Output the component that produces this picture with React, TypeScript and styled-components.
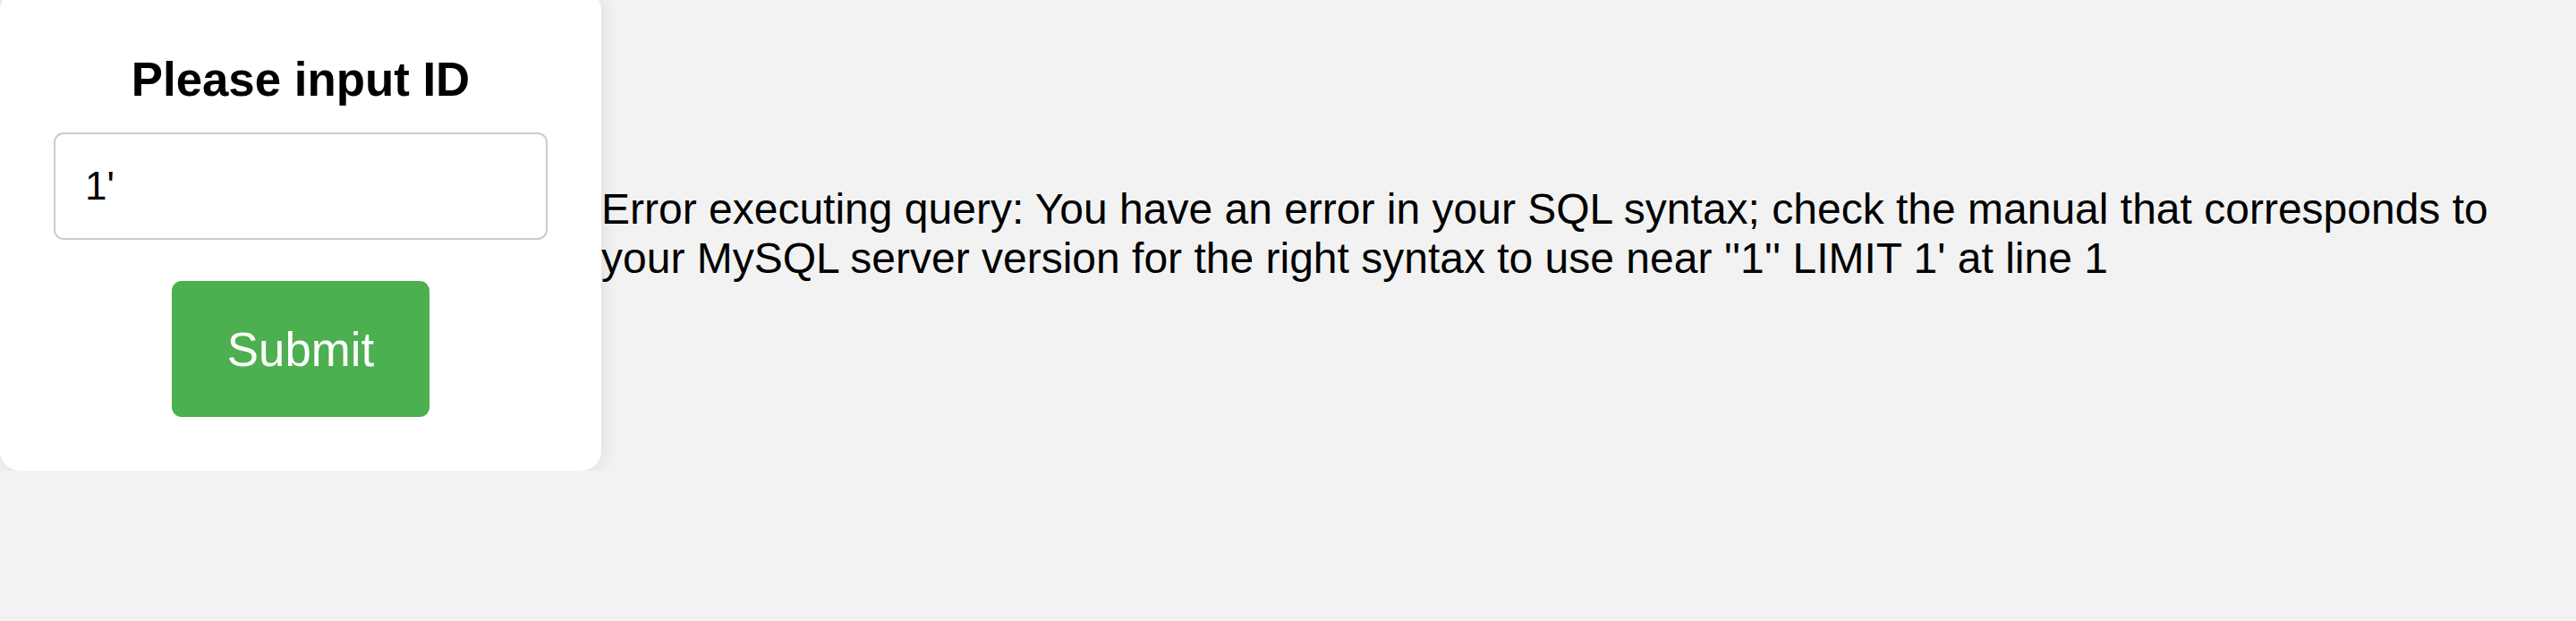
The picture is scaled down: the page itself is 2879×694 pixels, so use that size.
import React from "react";
import styled, { createGlobalStyle } from "styled-components";

const GlobalStyle = createGlobalStyle`
  html, body {
    margin: 0;
    padding: 0;
    background: #f2f2f2;
    font-family: "Liberation Sans", Arial, sans-serif;
    color: #000;
  }
`;

const Page = styled.div`
  display: flex;
  flex-direction: row;
  align-items: center;
  margin-top: -11px;
`;

const Card = styled.form`
  flex-shrink: 0;
  box-sizing: border-box;
  width: 672px;
  height: 537px;
  padding: 69px 0 0;
  display: flex;
  flex-direction: column;
  align-items: center;
  background: #ffffff;
  border-radius: 22px;
  box-shadow: 0 0 22px rgba(0, 0, 0, 0.1);
`;

const Title = styled.h2`
  margin: 0;
  font-size: 52.8px;
  font-weight: bold;
  line-height: normal;
`;

const IdInput = styled.input`
  box-sizing: border-box;
  width: 552px;
  height: 120px;
  margin-top: 29px;
  padding: 0 33px;
  border: 2.2px solid #cccccc;
  border-radius: 11px;
  background: #ffffff;
  font-family: "Liberation Sans", Arial, sans-serif;
  font-size: 44px;
  color: #000;
  outline: none;
`;

const SubmitButton = styled.button`
  box-sizing: border-box;
  height: 152px;
  margin-top: 46px;
  padding: 0 61.6px;
  border: none;
  border-radius: 11px;
  background: #4caf50;
  color: #ffffff;
  font-family: "Liberation Sans", Arial, sans-serif;
  font-size: 52.8px;
  line-height: normal;
  cursor: pointer;
`;

const Message = styled.p`
  flex: 1;
  margin: 0;
  padding-top: 7px;
  font-size: 48px;
  line-height: normal;
`;

export default function App() {
  return (
    <>
      <GlobalStyle />
      <Page>
        <Card onSubmit={(e) => e.preventDefault()}>
          <Title>Please input ID</Title>
          <IdInput type="text" defaultValue="1'" />
          <SubmitButton type="submit">Submit</SubmitButton>
        </Card>
        <Message>
          Error executing query: You have an error in your SQL syntax; check the manual that corresponds to your MySQL server version for the right syntax to use near ''1'' LIMIT 1' at line 1
        </Message>
      </Page>
    </>
  );
}
